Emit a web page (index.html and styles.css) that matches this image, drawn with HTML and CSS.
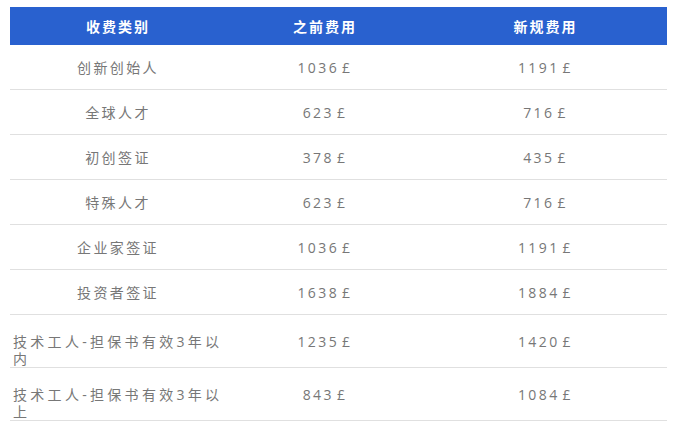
FILE: index.html
```html
<!DOCTYPE html>
<html lang="zh-CN">
<head>
<meta charset="utf-8">
<link rel="stylesheet" href="styles.css">
</head>
<body>
<table class="fees">
  <colgroup>
    <col class="c1"><col class="c2"><col class="c3">
  </colgroup>
  <thead>
    <tr><th>收费类别</th><th>之前费用</th><th>新规费用</th></tr>
  </thead>
  <tbody>
    <tr><td>创新创始人</td><td class="num">1036 £</td><td class="num">1191 £</td></tr>
    <tr><td>全球人才</td><td class="num">623 £</td><td class="num">716 £</td></tr>
    <tr><td>初创签证</td><td class="num">378 £</td><td class="num">435 £</td></tr>
    <tr><td>特殊人才</td><td class="num">623 £</td><td class="num">716 £</td></tr>
    <tr><td>企业家签证</td><td class="num">1036 £</td><td class="num">1191 £</td></tr>
    <tr><td>投资者签证</td><td class="num">1638 £</td><td class="num">1884 £</td></tr>
    <tr><td class="wrap"><span class="lines">技术工人-担保书有效3年以内</span></td><td class="num">1235 £</td><td class="num">1420 £</td></tr>
    <tr><td class="wrap"><span class="lines">技术工人-担保书有效3年以上</span></td><td class="num">843 £</td><td class="num">1084 £</td></tr>
  </tbody>
</table>
</body>
</html>
```
FILE: styles.css
```css
html, body {
  margin: 0;
  background: #fff;
}
body {
  padding: 7px 8px 0 10px;
  font-family: "Open Sans", "Noto Sans CJK SC", sans-serif;
}
.fees {
  width: 657px;
  border-collapse: collapse;
  table-layout: fixed;
}
.c1 { width: 216px; }
.c2 { width: 198px; }
.c3 { width: 243px; }
.fees th {
  background: #2961cf;
  color: #fff;
  font-weight: bold;
  font-size: 14px;
  letter-spacing: 2px;
  height: 38px;
  padding: 0 3px;
  text-align: center;
  vertical-align: middle;
}
.fees td {
  height: 44px;
  padding: 0 3px;
  text-align: center;
  vertical-align: middle;
  color: #777;
  font-size: 14px;
  letter-spacing: 2.4px;
  line-height: 17px;
  border-bottom: 1px solid #e0e0e0;
}
.fees td.num {
  word-spacing: -3px;
}
.fees td.wrap {
  text-align: left;
  vertical-align: top;
}
.lines {
  display: block;
  padding-top: 18px;
  letter-spacing: 3.3px;
}
```
